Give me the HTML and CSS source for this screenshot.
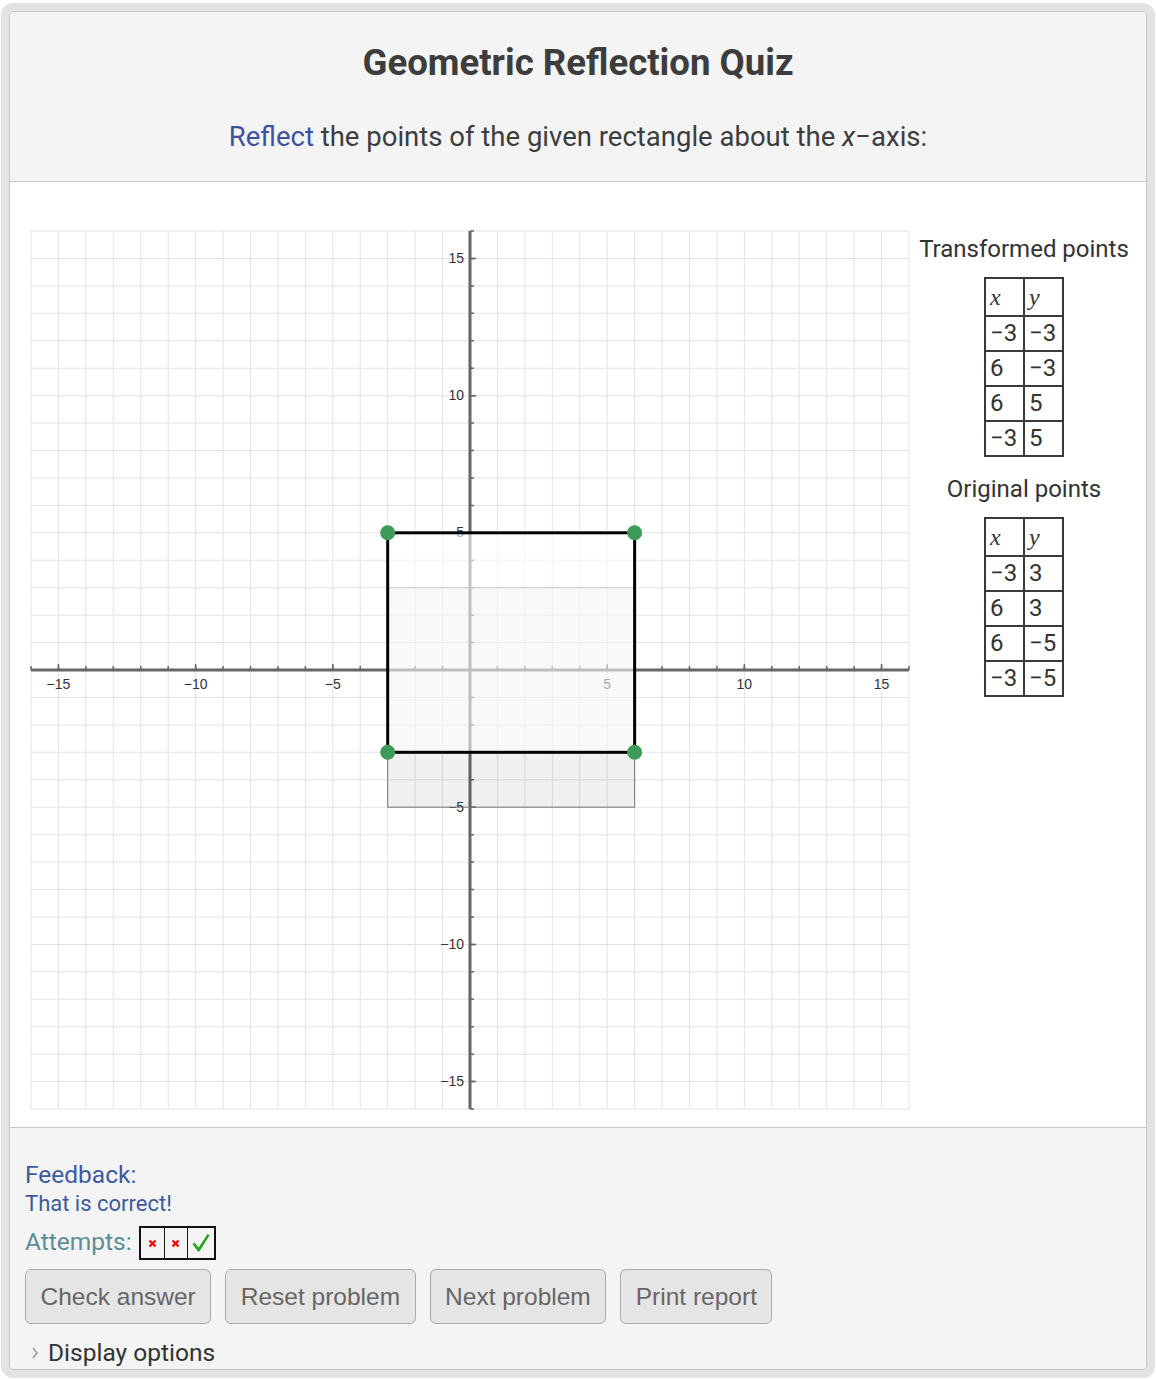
FILE: index.html
```html
<!DOCTYPE html>
<html lang="en">
<head>
    <meta charset="UTF-8">
    <meta name="viewport" content="width=device-width, initial-scale=1.0">
    <title>Geometric Reflection Quiz</title>
    <link rel="stylesheet" href="styles.css">
</head>
<body>
<div class="frame">
  <div class="quiz">

    <header class="quiz-head">
        <h1 class="title">Geometric Reflection Quiz</h1>
        <p class="prompt"><span class="verb">Reflect</span> the points of the given rectangle about the <i>x</i>−axis:</p>
    </header>

    <main class="quiz-body">
        <!-- 32 x 32 units, 27.4375px per unit, origin at 439,439 -->
        <svg class="plot" width="880" height="880" viewBox="-1 -1 880 880">
            <line class="grid" x1="-0.5" y1="439" x2="879" y2="439" stroke-width="878" stroke-dasharray="1 26.4375"/>
            <line class="grid" x1="439" y1="-0.5" x2="439" y2="879" stroke-width="878" stroke-dasharray="1 26.4375"/>

            <line class="axis" x1="0" y1="439" x2="878" y2="439"/>
            <line class="axis" x1="439" y1="0" x2="439" y2="878"/>

            <line class="tick" x1="-0.75" y1="437" x2="879" y2="437" stroke-width="4" stroke-dasharray="1.5 25.9375"/>
            <line class="tick" x1="26.6875" y1="436" x2="852.4" y2="436" stroke-width="6" stroke-dasharray="1.5 135.6875"/>
            <line class="tick" x1="441" y1="-0.75" x2="441" y2="879" stroke-width="4" stroke-dasharray="1.5 25.9375"/>
            <line class="tick" x1="442" y1="26.6875" x2="442" y2="852.4" stroke-width="6" stroke-dasharray="1.5 135.6875"/>

            <text class="tl" x="27.44" y="457.5" text-anchor="middle">−15</text>
            <text class="tl" x="164.63" y="457.5" text-anchor="middle">−10</text>
            <text class="tl" x="301.81" y="457.5" text-anchor="middle">−5</text>
            <text class="tl" x="576.19" y="457.5" text-anchor="middle">5</text>
            <text class="tl" x="713.38" y="457.5" text-anchor="middle">10</text>
            <text class="tl" x="850.56" y="457.5" text-anchor="middle">15</text>

            <text class="tl" x="433" y="31.9" text-anchor="end">15</text>
            <text class="tl" x="433" y="169.1" text-anchor="end">10</text>
            <text class="tl" x="433" y="306.3" text-anchor="end">5</text>
            <text class="tl" x="433" y="580.7" text-anchor="end">−5</text>
            <text class="tl" x="433" y="717.9" text-anchor="end">−10</text>
            <text class="tl" x="433" y="855.1" text-anchor="end">−15</text>

            <rect class="orig" x="356.69" y="356.69" width="246.94" height="219.5"/>
            <rect class="image" x="356.69" y="301.81" width="246.94" height="219.5"/>

            <circle class="pt" cx="356.69" cy="301.81" r="7.5"/>
            <circle class="pt" cx="603.63" cy="301.81" r="7.5"/>
            <circle class="pt" cx="603.63" cy="521.31" r="7.5"/>
            <circle class="pt" cx="356.69" cy="521.31" r="7.5"/>
        </svg>

        <aside class="points">
            <h2 class="points-title">Transformed points</h2>
            <table class="pts">
                <tr><th>x</th><th>y</th></tr>
                <tr><td>−3</td><td>−3</td></tr>
                <tr><td>6</td><td>−3</td></tr>
                <tr><td>6</td><td>5</td></tr>
                <tr><td>−3</td><td>5</td></tr>
            </table>
            <h2 class="points-title">Original points</h2>
            <table class="pts">
                <tr><th>x</th><th>y</th></tr>
                <tr><td>−3</td><td>3</td></tr>
                <tr><td>6</td><td>3</td></tr>
                <tr><td>6</td><td>−5</td></tr>
                <tr><td>−3</td><td>−5</td></tr>
            </table>
        </aside>
    </main>

    <footer class="quiz-foot">
        <div class="fb-label">Feedback:</div>
        <div class="fb-msg">That is correct!</div>
        <div class="attempts">
            <span class="att-label">Attempts:</span>
            <span class="att-box">
                <span class="att"><svg width="9" height="9" viewBox="0 0 9 9"><path class="miss" d="M1.5 1.5 L7.5 7.5 M7.5 1.5 L1.5 7.5"/></svg></span>
                <span class="att"><svg width="9" height="9" viewBox="0 0 9 9"><path class="miss" d="M1.5 1.5 L7.5 7.5 M7.5 1.5 L1.5 7.5"/></svg></span>
                <span class="att att-ok"><svg width="20" height="20" viewBox="0 0 20 20"><polygon class="hit" points="1.5,11 3.5,9.8 7.6,14.6 16.6,1 18.6,2.2 8.4,18.6 6.9,18.6"/></svg></span>
            </span>
        </div>
        <div class="actions">
            <button class="btn" type="button">Check answer</button>
            <button class="btn" type="button">Reset problem</button>
            <button class="btn" type="button">Next problem</button>
            <button class="btn" type="button">Print report</button>
        </div>
        <div class="options">
            <svg class="chev" width="6" height="12" viewBox="0 0 6 12"><path d="M1 1 L5 6 L1 11"/></svg>
            Display options
        </div>
    </footer>

  </div>
</div>
</body>
</html>
```

FILE: styles.css
```css
* {
    box-sizing: border-box;
}

body {
    margin: 0;
    background: #fff;
    font-family: Roboto, "Liberation Sans", sans-serif;
    color: #3d3d3d;
}

.frame {
    margin: 3px 1px 0;
    border: 8px solid #e3e3e3;
    border-radius: 12px;
}

.quiz {
    border: 1px solid #c6c6c6;
    border-radius: 4px;
    background: #f4f4f4;
    overflow: hidden;
}

/* header */
.quiz-head {
    padding: 29px 0 28px;
    text-align: center;
    border-bottom: 1px solid #cacaca;
}

.title {
    margin: 0;
    font-size: 36.6px;
    line-height: 44px;
    font-weight: 700;
    color: #3d3d3d;
}

.prompt {
    margin: 36px 0 0;
    font-size: 27.5px;
    line-height: 32px;
    color: #3d3d3d;
}

.verb {
    color: #3f51a3;
}

/* graph + tables */
.quiz-body {
    display: flex;
    align-items: flex-start;
    background: #fff;
    padding: 48px 0 17px 20px;
}

.plot {
    display: block;
    flex: none;
}

.grid {
    stroke: #e3e3e3;
}

.axis {
    stroke: #666;
    stroke-width: 3;
}

.tick {
    stroke: #666;
}

.tl {
    font: 14px "Liberation Sans", Arial, sans-serif;
    fill: #333;
}

.orig {
    fill: rgba(0, 0, 0, 0.06);
    stroke: #777;
    stroke-width: 1;
}

.image {
    fill: rgba(255, 255, 255, 0.6);
    stroke: #000;
    stroke-width: 3;
}

.pt {
    fill: #3d9b5a;
}

.points {
    flex: 1;
    padding: 5px 8px 0 0;
    text-align: center;
}

.points-title {
    margin: 0;
    font-size: 24px;
    line-height: 29px;
    font-weight: 400;
    color: #333;
}

.pts {
    margin: 13px auto 0;
    border-collapse: collapse;
}

.pts + .points-title {
    margin-top: 18px;
}

.pts td,
.pts th {
    border: 2px solid #3a3a3a;
    width: 39px;
    padding: 0 0 0 4px;
    text-align: left;
    font-size: 24px;
    line-height: 33px;
    font-weight: 400;
    color: #333;
}

.pts th {
    line-height: 36px;
    font-family: "Liberation Serif", serif;
    font-style: italic;
}

/* footer */
.quiz-foot {
    padding: 32px 15px 2px;
    border-top: 1px solid #cacaca;
}

.fb-label {
    font-size: 24.5px;
    line-height: 29px;
    color: #3b5b9e;
}

.fb-msg {
    margin-top: 2px;
    font-size: 22px;
    line-height: 26px;
    color: #3b5b9e;
}

.attempts {
    display: flex;
    align-items: flex-start;
    margin-top: 9px;
}

.att-label {
    margin: 1px 7px 0 0;
    font-size: 24.5px;
    line-height: 29px;
    color: #5b8d99;
}

.att-box {
    display: flex;
    height: 34px;
    border: 2px solid #111;
}

.att {
    width: 23px;
    display: flex;
    align-items: center;
    justify-content: center;
}

.att + .att {
    border-left: 1.5px solid #111;
}

.att-ok {
    width: 27px;
}

.miss {
    stroke: #f00;
    stroke-width: 2.2;
    fill: none;
}

.hit {
    fill: #1fa51f;
}

.actions {
    display: flex;
    gap: 14px;
    margin-top: 9px;
}

.btn {
    font: 24.5px/29px "Liberation Sans", Arial, sans-serif;
    color: #666;
    background: #e5e5e5;
    border: 1px solid #a9a9a9;
    border-radius: 6px;
    padding: 12px 14.5px;
    cursor: pointer;
}

.options {
    display: flex;
    align-items: center;
    margin-top: 14px;
    font-size: 24.5px;
    line-height: 29px;
    color: #333;
}

.chev {
    margin: 0 10px 0 7px;
}

.chev path {
    fill: none;
    stroke: #999;
    stroke-width: 1.5;
}
```
